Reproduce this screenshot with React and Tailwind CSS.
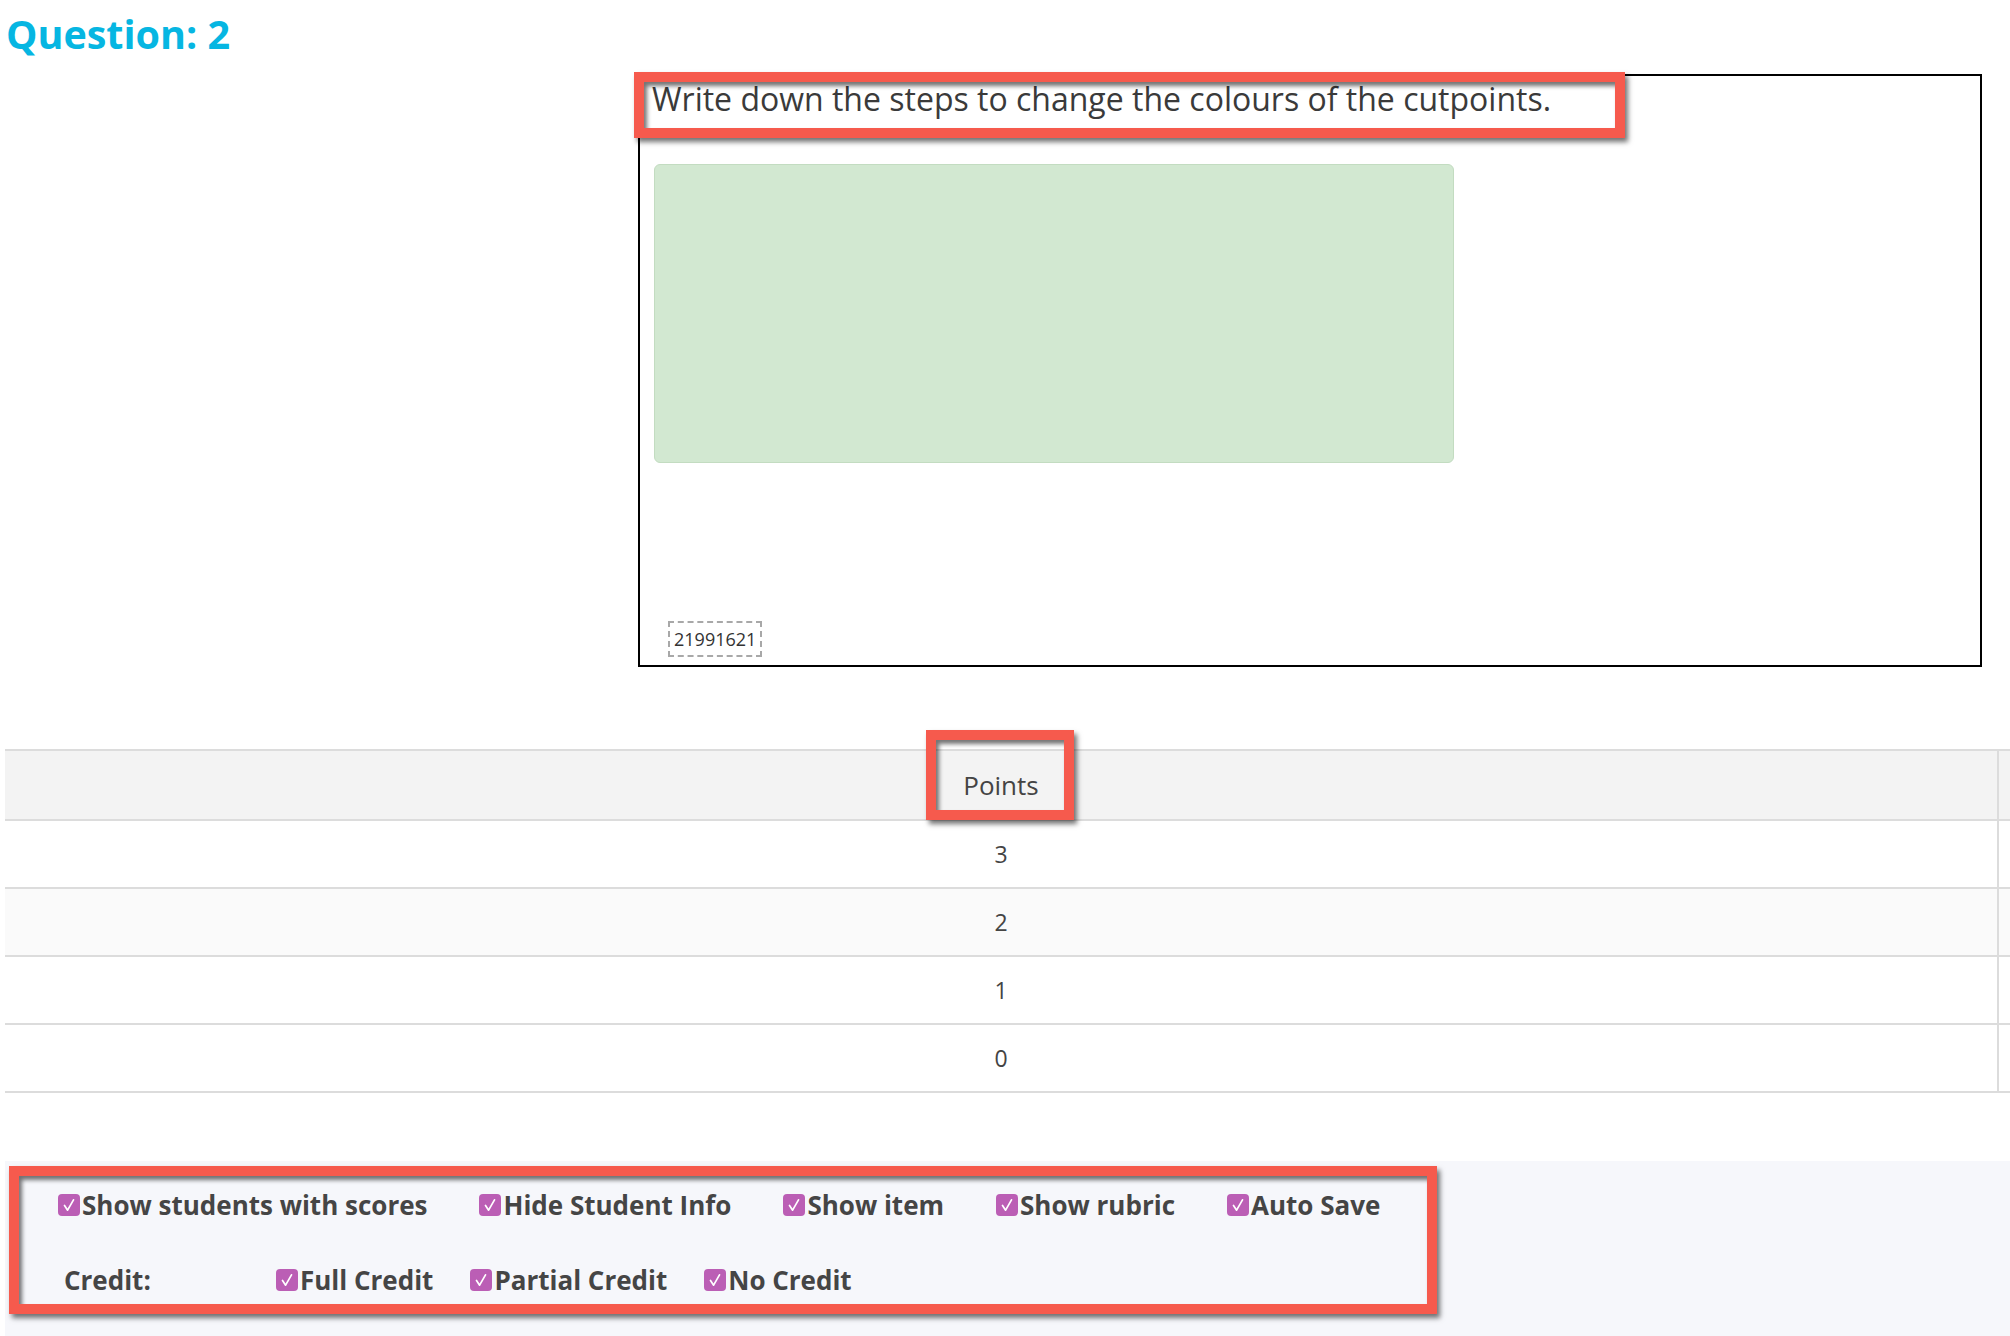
import React from "react";

const ROWS = ["3", "2", "1", "0"];

const TOP_OPTIONS = [
  "Show students with scores",
  "Hide Student Info",
  "Show item",
  "Show rubric",
  "Auto Save",
];

const CREDIT_OPTIONS = ["Full Credit", "Partial Credit", "No Credit"];

function Check({ label }) {
  return (
    <label className="flex items-center gap-[2px] whitespace-nowrap">
      <span className="flex h-[22px] w-[22px] items-center justify-center rounded-[4px] bg-[#bb5eb5]">
        <svg viewBox="0 0 22 22" className="h-[22px] w-[22px]">
          <path
            d="M6.5 11.5 L9.6 16.2 L15.5 5.8"
            fill="none"
            stroke="#fff"
            strokeWidth="1.7"
            strokeLinecap="round"
            strokeLinejoin="round"
          />
        </svg>
      </span>
      <span className="text-[26px] font-bold leading-[36px] text-[#454545]">
        {label}
      </span>
    </label>
  );
}

// red annotation frame laid over the content
const frame =
  "pointer-events-none absolute border-[10px] border-[#f65a4d] shadow-[3px_4px_5px_rgba(0,0,0,0.55),inset_3px_4px_4px_rgba(0,0,0,0.55)]";

export default function App() {
  return (
    <div className="relative flex h-[1336px] w-[2010px] flex-col overflow-hidden bg-white font-['Open_Sans',sans-serif]">
      <h1 className="pl-[6px] pt-[10px] text-[39.5px] font-bold leading-[48px] text-[#06b6e2]">
        Question: 2
      </h1>

      {/* question box */}
      <div className="relative ml-[638px] mt-[16px] flex h-[593px] w-[1344px] flex-col border-2 border-black">
        <p className="pl-[12px] text-[32px] leading-[46px] text-[#3a3a3a]">
          Write down the steps to change the colours of the cutpoints.
        </p>
        <div className="ml-[14px] mt-[42px] h-[299px] w-[800px] rounded-[6px] border border-[#c3dcc1] bg-[#d2e8d1]" />
        <div className="mb-[8px] ml-[28px] mt-auto self-start border-2 border-dashed border-[#a8a8a8] px-[4px] text-[18px] leading-[32px] text-[#333]">
          21991621
        </div>
        <div className={`${frame} left-[-6px] top-[-4px] h-[66px] w-[991px]`} />
      </div>

      {/* rubric table */}
      <div className="relative ml-[5px] mt-[82px] grid grid-cols-[1994px_100px] border-t-2 border-[#dcdcdc] text-[#444]">
        <div className="flex h-[70px] items-center justify-center border-b-2 border-r-2 border-[#dcdcdc] bg-[#f3f3f3] text-[26px]">
          Points
        </div>
        <div className="h-[70px] border-b-2 border-[#dcdcdc] bg-[#f3f3f3]" />
        {ROWS.map((v, i) => (
          <React.Fragment key={v}>
            <div
              className={`flex h-[68px] items-center justify-center border-b-2 border-r-2 border-[#dcdcdc] text-[23px] ${
                i === 1 ? "bg-[#fafafa]" : "bg-white"
              }`}
            >
              {v}
            </div>
            <div
              className={`h-[68px] border-b-2 border-[#dcdcdc] ${
                i === 1 ? "bg-[#fafafa]" : "bg-white"
              }`}
            />
          </React.Fragment>
        ))}
        <div className={`${frame} left-[921px] top-[-21px] h-[90px] w-[148px]`} />
      </div>

      {/* grading options */}
      <div className="relative ml-[5px] mt-[68px] flex-1 bg-[#f6f7fb]">
        <div className="flex gap-[52px] pl-[53px] pt-[26px]">
          {TOP_OPTIONS.map((o) => (
            <Check key={o} label={o} />
          ))}
        </div>
        <div className="mt-[39px] flex items-center pl-[59px]">
          <span className="w-[212px] text-[26px] font-bold leading-[36px] text-[#454545]">
            Credit:
          </span>
          <div className="flex gap-[37px]">
            {CREDIT_OPTIONS.map((o) => (
              <Check key={o} label={o} />
            ))}
          </div>
        </div>
        <div className={`${frame} left-[4px] top-[5px] h-[148px] w-[1428px]`} />
      </div>
    </div>
  );
}
